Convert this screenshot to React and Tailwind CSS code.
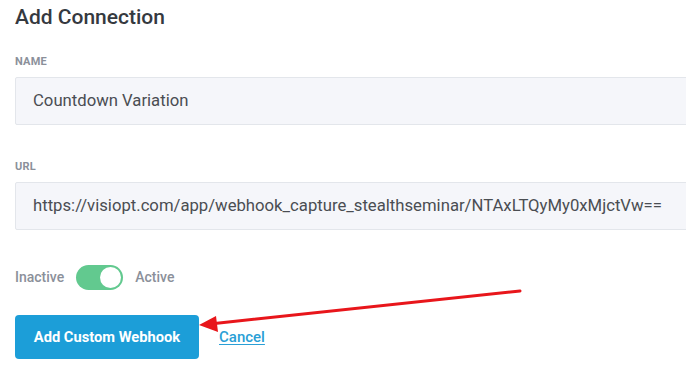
import { useState } from "react";

const Field = ({ label, value, className = "" }) => {
	return (
		<div className={className}>
			<label className="block text-[11px] font-bold uppercase tracking-[0.2px] text-[#8b909a] leading-none">
				{label}
			</label>
			<div className="mt-[10px] h-[48px] w-[680px] bg-[#f5f6fa] border border-[#e3e6eb] rounded-[2px] flex items-center pl-[17px] text-[16.7px] text-[#4a4d52] whitespace-nowrap">
				{value}
			</div>
		</div>
	);
};

const App = () => {
	const [active, setActive] = useState(true);

	return (
		<div
			className="relative w-[686px] h-[367px] overflow-hidden bg-white"
			style={{ fontFamily: "Roboto, 'Liberation Sans', sans-serif" }}
		>
			<div className="pl-[15px] pt-[3px]">
				<h1 className="text-[21px] font-medium text-[#35393f] leading-[28px]">
					Add Connection
				</h1>
				<Field className="mt-[25px]" label="Name" value="Countdown Variation" />
				<Field
					className="mt-[36px]"
					label="URL"
					value="https://visiopt.com/app/webhook_capture_stealthseminar/NTAxLTQyMy0xMjctVw=="
				/>
				<div className="mt-[35px] flex items-center gap-[12px] text-[14px] font-medium text-[#8b909a]">
					<span>Inactive</span>
					<button
						type="button"
						onClick={() => setActive(!active)}
						className="relative w-[47px] h-[25px] rounded-full bg-[#62c98f] flex items-center"
					>
						<span className="absolute right-[2px] top-[2px] w-[21px] h-[21px] rounded-full bg-white" />
					</button>
					<span>Active</span>
				</div>
				<div className="mt-[25px] flex items-center gap-[20px]">
					<button
						type="button"
						className="h-[44px] w-[184px] rounded-[4px] bg-[#1c9ed8] text-white text-[14.7px] font-bold"
					>
						Add Custom Webhook
					</button>
					<a href="#" className="text-[15px] font-medium text-[#2a9fd6] underline underline-offset-2">
						Cancel
					</a>
				</div>
			</div>
			<svg
				className="absolute left-0 top-0 pointer-events-none"
				width="686"
				height="367"
				viewBox="0 0 686 367"
			>
				<line x1="520" y1="291" x2="210" y2="324" stroke="#e8161b" strokeWidth="3" strokeLinecap="round" />
				<polygon points="199,325 216,316 218,332" fill="#e8161b" />
			</svg>
		</div>
	);
};

export default App;
